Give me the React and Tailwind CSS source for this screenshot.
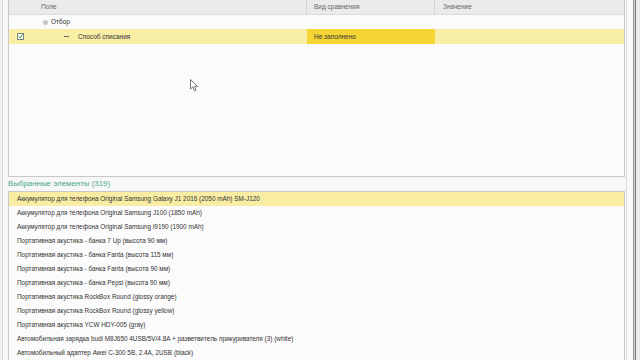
import React from "react";

const items = [
  "Аккумулятор для телефона Original Samsung Galaxy J1 2016 (2050 mAh) SM-J120",
  "Аккумулятор для телефона Original Samsung J100 (1850 mAh)",
  "Аккумулятор для телефона Original Samsung i9190 (1900 mAh)",
  "Портативная акустика - банка 7 Up (высота 90 мм)",
  "Портативная акустика - банка Fanta (высота 115 мм)",
  "Портативная акустика - банка Fanta (высота 90 мм)",
  "Портативная акустика - банка Pepsi (высота 90 мм)",
  "Портативная акустика RockBox Round (glossy orange)",
  "Портативная акустика RockBox Round (glossy yellow)",
  "Портативная акустика YCW HDY-005 (gray)",
  "Автомобильная зарядка budi M8J650 4USB/5V/4.8A + разветвитель прикуривателя (3) (white)",
  "Автомобильный адаптер Awei C-300 5B, 2.4A, 2USB (black)",
];

export default function App() {
  return (
    <div
      className="w-[640px] h-[360px] overflow-hidden bg-[#f6f7f6] flex text-[#333]"
      style={{ fontFamily: '"Liberation Sans", Arial, sans-serif' }}
    >
      <div className="w-[3px] border-r border-[#d6d6d6] bg-[#f0f0f0]" />
      <div className="w-[5px]" />
      <div className="flex-1 flex flex-col min-w-0">
        {/* top table */}
        <div className="h-[177px] border border-t-0 border-[#c9c9c9] bg-[#fbfbfb] flex flex-col">
          <div className="h-[15px] bg-[#ebebeb] border-b border-[#dcdcdc] flex text-[6.5px] text-[#666] items-center">
            <div className="w-[298px] pl-[32px] border-r border-[#d4d4d4] h-full flex items-center">Поле</div>
            <div className="w-[128px] pl-[7px] border-r border-[#d4d4d4] h-full flex items-center">Вид сравнения</div>
            <div className="flex-1 pl-[8px] h-full flex items-center">Значение</div>
          </div>
          <div className="h-[14px] flex items-center text-[6.5px] text-[#333]">
            <div className="w-[34px]" />
            <div className="w-[5px] h-[5px] rounded-full bg-[#c8c8c8]" />
            <div className="ml-[3px]">Отбор</div>
          </div>
          <div className="h-[15px] flex items-center bg-[#f8eea6] text-[6.5px]">
            <div className="w-[298px] h-full flex items-center">
              <div className="ml-[8px] w-[7px] h-[7px] border border-[#7a8a7a] bg-white flex items-center justify-center">
                <svg width="7" height="7" viewBox="0 0 7 7">
                  <path d="M1 3.5 L3 5.5 L6.5 0.5" stroke="#2f8a3a" strokeWidth="1.4" fill="none" />
                </svg>
              </div>
              <div className="ml-[40px] w-[5px] h-[1.5px] bg-[#666]" />
              <div className="ml-[9px]">Способ списания</div>
            </div>
            <div className="w-[128px] h-full bg-[#f4d535] flex items-center pl-[7px]">Не заполнено</div>
            <div className="flex-1" />
          </div>
          <div className="flex-1 relative">
            <svg className="absolute left-[181px] top-[35px]" width="9" height="13" viewBox="0 0 9 13">
              <path d="M0.5 0.5 L0.5 10 L2.8 7.8 L4.5 11.8 L6 11.2 L4.4 7.4 L7.6 7.4 Z" fill="#fff" stroke="#555" strokeWidth="0.8" />
            </svg>
          </div>
        </div>
        {/* label */}
        <div className="h-[14px] flex items-end pb-[1px] text-[7.9px] text-[#4ba88b]">
          Выбранные элементы (319)
        </div>
        {/* list */}
        <div className="flex-1 border border-b-0 border-[#c9c9c9] bg-[#fbfbfb] flex flex-col">
          {items.map((t, i) => (
            <div
              key={i}
              className={
                "h-[14px] shrink-0 flex items-center pl-[8px] text-[6.4px] text-[#333] " +
                (i === 0 ? "bg-[#f8eda3]" : "")
              }
            >
              {t}
            </div>
          ))}
        </div>
      </div>
      <div className="w-[1px]" />
      <div className="w-[1px] bg-[#dcdcdc]" />
      <div className="w-[6px] bg-[#f8f8f8]" />
      <div className="w-[1px] bg-[#9a9a9a]" />
      <div className="w-[1px] bg-[#d0d0d0]" />
      <div className="w-[1px] bg-[#7a7a7a]" />
      <div className="w-[4px] bg-[#ececec]" />
    </div>
  );
}
